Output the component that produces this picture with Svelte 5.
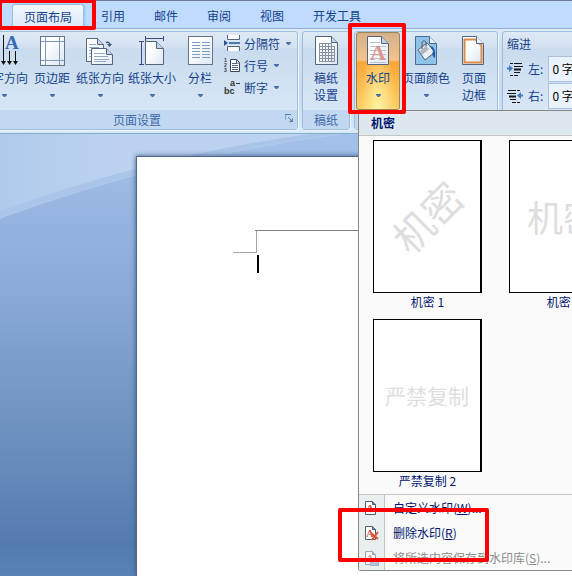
<script>
    const tabs = ["页面布局", "引用", "邮件", "审阅", "视图", "开发工具"];

    const pageTools = [
        { icon: "direction", label: "文字方向" },
        { icon: "margins", label: "页边距" },
        { icon: "orientation", label: "纸张方向" },
        { icon: "size", label: "纸张大小" },
        { icon: "columns", label: "分栏" }
    ];

    const smallTools = [
        { icon: "breaks", label: "分隔符" },
        { icon: "lines", label: "行号" },
        { icon: "hyphen", label: "断字" }
    ];

    const watermarks = [
        { text: "机密", caption: "机密 1", kind: "diagonal" },
        { text: "机密", caption: "机密 2", kind: "wide" },
        { text: "严禁复制", caption: "严禁复制 2", kind: "flat" }
    ];

    const commands = [
        { icon: "custom", label: "自定义水印", key: "W", more: "..." },
        { icon: "remove", label: "删除水印", key: "R", more: "" },
        { icon: "save", label: "将所选内容保存到水印库", key: "S", more: "...", disabled: true }
    ];

    let active = $state("页面布局");
    let left = $state("0 字符");
    let right = $state("0 字符");
</script>

{#snippet sheet(x, y, w, h, fold)}
    <path
        d="M{x} {y}h{w - fold}l{fold} {fold}v{h - fold}h{-w}z"
        fill="url(#paper)"
        stroke="#53667f"
    />
    <path d="M{x + w - fold} {y}v{fold}h{fold}" fill="#c3d4e8" stroke="#53667f" />
{/snippet}

{#snippet bigIcon(name)}
    <svg class="big-icon" viewBox="0 0 32 32" aria-hidden="true">
        {#if name === "direction"}
            <path d="M15.5 0v27M21.5 16v11M27.5 16v11" stroke="#111" fill="none" />
            <path d="M13 26h5l-2.500 4zM19 26h5l-2.500 4zM25 26h5l-2.500 4z" fill="#111" />
            <text x="17" y="14" class="icon-serif" font-size="19" fill="#376bb5">A</text>
        {:else if name === "margins"}
            <rect x="4.500" y="1.500" width="24" height="29" fill="url(#paper)" stroke="#66758a" />
            <path d="M9.500 2v28M23.500 2v28M5 6.500h23M5 25.500h23" stroke="#7e9abc" />
        {:else if name === "orientation"}
            {@render sheet(2.500, 3.500, 17, 23, 6)}
            <path d="M5 9.500h7M5 12.500h10M5 15.500h4M5 18.500h3M5 21.500h3" stroke="#8ea8c8" />
            {@render sheet(7.500, 13.500, 21, 16, 6)}
            <path d="M10 18.500h11M10 21.500h14M10 24.500h15M10 26.500h12" stroke="#8ea8c8" />
            <path d="M22 7.500q4-1 4 3" fill="none" stroke="#40587f" stroke-width="1.500" />
            <path d="M23 9h5l-2.500 3z" fill="#40587f" />
        {:else if name === "size"}
            {@render sheet(9.500, 6.500, 18, 23, 7)}
            <path d="M10 3.500h17M9.500 1v5M27.500 1v5M5.500 7v22M3 6.500h5M3 29.500h5" stroke="#42458a" />
        {:else if name === "columns"}
            <rect x="4.500" y="1.500" width="24" height="28" fill="url(#paper)" stroke="#66758a" />
            <path d="M8 7.500h8M18 7.500h8M8 10.500h8M18 10.500h8M8 13.500h8M18 13.500h8M8 16.500h8M18 16.500h8M8 19.500h8M18 19.500h8M8 22.500h8M18 22.500h8" stroke="#7f9cc0" />
        {:else if name === "grid"}
            {@render sheet(5.500, 1.500, 22, 28, 6)}
            <path d="M9 8.500h12M9 11.500h15M9 14.500h15M9 17.500h15M9 20.500h15M9 23.500h15M9 26.500h15M9.500 8v19M12.500 8v19M15.500 8v19M18.500 8v19M21.500 8v19M24.500 11v16" stroke="#8791a2" />
        {:else if name === "watermark"}
            {@render sheet(5.500, 1.500, 21, 28, 7)}
            <path d="M8 7.500h10M8 11.500h16M8 15.500h16M8 19.500h16M8 23.500h16M8 27.500h16" stroke="#b8c2cf" />
            <text x="8" y="25" class="icon-serif" font-size="22" fill="#dc9590">A</text>
        {:else if name === "color"}
            <path d="M5.500 1.500h14l7 7v21h-21z" fill="#8fc3e9" stroke="#4a6c94" />
            <path d="M19.500 1.500v7h7" fill="#e7f2fb" stroke="#4a6c94" />
            <path d="M8 15l9-7 8 9-10 8z" fill="#e9eff4" stroke="#53606e" />
            <path d="M12 14V8q1-4 4-1v8" fill="none" stroke="#4f5b68" />
            <path d="M20 11q6 0 5 12-4-2-2-7z" fill="#225aa6" />
            <path d="M10 16l6-5 3 3-7 6z" fill="#abb7c2" />
        {:else}
            {@render sheet(4.500, 1.500, 21, 28, 7)}
            <path d="M6.500 4.500h11l6 6v17h-17z" fill="none" stroke="#d98b4d" stroke-width="2" />
            <path d="M18.500 1.500v7h7" fill="#e7f2fb" stroke="#53667f" />
        {/if}
    </svg>
{/snippet}

{#snippet smallIcon(name)}
    <svg class="small-icon" viewBox="0 0 16 16" aria-hidden="true">
        {#if name === "breaks"}
            <path d="M3.500 0v4.500h12V0M3.500 16v-4.500h12V16" fill="#fff" stroke="#53667f" />
            <path d="M5 8h11" stroke="#4f74ae" stroke-width="2" />
            <path d="M0 5l4 3-4 3z" fill="#31548e" />
        {:else if name === "lines"}
            <text x="0" y="5" class="icon-sans" font-size="5">1</text>
            <text x="0" y="10" class="icon-sans" font-size="5">2</text>
            <text x="0" y="15" class="icon-sans" font-size="5">3</text>
            <path d="M6.500 2.500h6l3 3v9h-9z" fill="#fff" stroke="#34465f" />
            <path d="M8 6.500h5M8 8.500h6M8 10.500h6M8 12.500h6M12.500 2v4h3" stroke="#53667f" fill="none" />
        {:else if name === "hyphen"}
            <text x="0" y="15" class="icon-sans" font-size="9">bc</text>
            <text x="6" y="7" class="icon-sans" font-size="9">a</text>
            <path d="M12 4.500h4" stroke="#333" />
        {:else if name === "indent-left" || name === "indent-right"}
            <g transform={name === "indent-right" ? "matrix(-1 0 0 1 16 0)" : null}>
                <path d="M3 2.500h3M7 2.500h8M7 5.500h9M7 11.500h6M3 14.500h3M7 14.500h4" stroke="#151515" />
                <path d="M7 8.500h7" stroke="#151515" stroke-width="2" />
                <path d="M0 7.500h3" stroke="#4779bd" stroke-width="2" />
                <path d="M2 4l4 3.500-4 3.500z" fill="#4779bd" />
            </g>
        {:else}
            <path d="M2.500 1.500h7l3 3v10h-10z" fill="#fff" stroke="#4a5e78" />
            <path d="M9.500 1.500v3h3" fill="#7187a2" stroke="#4a5e78" />
            <text x="3" y="12" class="icon-serif" font-size="11" fill="#cf5550">A</text>
            {#if name === "remove"}
                <path d="M8 8l7 6M15 7l-6 8" stroke="#e0532f" stroke-width="2" />
            {:else if name === "save"}
                <path d="M7.500 8.500h8v7h-8z" fill="#7d9bd0" stroke="#5d76a5" />
                <path d="M9 9h5v3H9z" fill="#fff" />
            {/if}
        {/if}
    </svg>
{/snippet}

{#snippet arrow()}
    <svg class="arrow" viewBox="0 0 5 3" aria-hidden="true"><path d="M0 0h5v1L3 3H2L0 1z" fill="#4a6ea9" /></svg>
{/snippet}

<svg class="defs" aria-hidden="true">
    <linearGradient id="paper" x1="0" y1="0" x2="1" y2="1">
        <stop offset="0.3" stop-color="#fff" />
        <stop offset="1" stop-color="#dce6f2" />
    </linearGradient>
</svg>

<div class="window">
    <nav class="tabs">
        {#each tabs as tab}
            <button class="tab" class:active={tab === active} onclick={() => (active = tab)}>{tab}</button>
        {/each}
    </nav>

    <div class="ribbon">
        <section class="group page-setup">
            <div class="tools">
                {#each pageTools as tool}
                    <button class="tool">
                        {@render bigIcon(tool.icon)}
                        <span>{tool.label}</span>
                        {@render arrow()}
                    </button>
                {/each}
                <div class="small-tools">
                    {#each smallTools as tool}
                        <button class="small-tool">
                            {@render smallIcon(tool.icon)}
                            <span>{tool.label}</span>
                            {@render arrow()}
                        </button>
                    {/each}
                </div>
            </div>
            <footer class="group-title">
                <span>页面设置</span>
                <button class="launcher" aria-label="页面设置">
                    <svg viewBox="0 0 8 8"><path d="M0 6V.5h6M3 3l3 3" fill="none" stroke="#5b7fae" /><path d="M4 8h4V4z" fill="#5b7fae" /></svg>
                </button>
            </footer>
        </section>

        <section class="group">
            <div class="tools">
                <button class="tool">
                    {@render bigIcon("grid")}
                    <span>稿纸<br />设置</span>
                </button>
            </div>
            <footer class="group-title"><span>稿纸</span></footer>
        </section>

        <section class="group">
            <div class="tools">
                <button class="tool pressed">
                    {@render bigIcon("watermark")}
                    <span>水印</span>
                    {@render arrow()}
                </button>
                <button class="tool">
                    {@render bigIcon("color")}
                    <span>页面颜色</span>
                    {@render arrow()}
                </button>
                <button class="tool">
                    {@render bigIcon("border")}
                    <span>页面<br />边框</span>
                </button>
            </div>
            <footer class="group-title"><span>页面背景</span></footer>
        </section>

        <section class="group paragraph">
            <h2>缩进</h2>
            <label class="field">
                {@render smallIcon("indent-left")}
                <span>左:</span>
                <input bind:value={left} />
            </label>
            <label class="field">
                {@render smallIcon("indent-right")}
                <span>右:</span>
                <input bind:value={right} />
            </label>
        </section>
    </div>

    <main class="workspace">
        <svg class="waves" viewBox="0 0 572 90" preserveAspectRatio="none" aria-hidden="true">
            <linearGradient id="sky">
                <stop offset="0" stop-color="#afcbea" />
                <stop offset="0.4" stop-color="#bdd2f0" />
            </linearGradient>
            <path d="M0 0h340Q170 22 0 84z" fill="#a9c5ea" />
            <path d="M0 0h310Q160 20 0 77z" fill="url(#sky)" />
            <path d="M340 0Q170 22 0 84" fill="none" stroke="#b2cbeb" />
        </svg>
        <div class="paper">
            <div class="crop-mark"></div>
            <div class="caret"></div>
        </div>
    </main>

    <aside class="gallery">
        <h2>机密</h2>
        <div class="thumbs">
            {#each watermarks as mark}
                <button class="thumb">
                    <span class="preview {mark.kind}"><span>{mark.text}</span></span>
                    <span class="caption">{mark.caption}</span>
                </button>
            {/each}
        </div>
        <div class="commands">
            {#each commands as command}
                <button class="command" disabled={command.disabled}>
                    <span class="command-icon">{@render smallIcon(command.icon)}</span>
                    <span>{command.label}(<u>{command.key}</u>){command.more}</span>
                </button>
            {/each}
        </div>
    </aside>

    <div class="marker marker-tab"></div>
    <div class="marker marker-tool"></div>
    <div class="marker marker-command"></div>
</div>

<style>
    :global(body) {
        overflow: hidden;
    }

    .window {
        position: relative;
        display: flex;
        flex-direction: column;
        min-height: 100vh;
        overflow: hidden;
        font-family: "Noto Sans CJK SC", sans-serif;
        font-size: 12px;
        line-height: 17px;
        color: #15428b;
    }

    button,
    input {
        font: inherit;
        color: inherit;
        padding: 0;
        border: 0;
        background: none;
    }

    h2 {
        margin: 0;
        font-size: 12px;
        font-weight: normal;
    }

    .defs {
        position: absolute;
        width: 0;
        height: 0;
    }

    .icon-serif {
        font-family: "Liberation Serif", serif;
        font-weight: bold;
    }

    .icon-sans {
        font-family: "Liberation Sans", sans-serif;
        font-weight: bold;
        fill: #333;
    }

    .tabs {
        display: flex;
        gap: 1px;
        height: 24px;
        padding: 3px 0 0 12px;
        border-top: 1px solid #6b7c93;
        background: #bfdbff;
    }

    .tab {
        padding: 0 14px;
        line-height: 20px;
        white-space: nowrap;
    }

    .tab.active {
        width: 72px;
        margin-right: 2px;
        padding: 0;
        border: 1px solid #9ebde3;
        border-bottom: 0;
        border-radius: 3px 3px 0 0;
        background: linear-gradient(#f3f8fd, #dbe8f6);
        box-shadow: 1px 0 2px #7fd0e8;
    }

    .ribbon {
        display: flex;
        gap: 4px;
        height: 99px;
        padding: 2px 0 3px;
        border-top: 1px solid #8db2e3;
        border-bottom: 1px solid #82aec8;
        background: linear-gradient(#dfeaf6, #cfdff0 16px, #c8daee 70px, #d9ebf9);
    }

    .group {
        flex: none;
        display: flex;
        flex-direction: column;
        box-sizing: border-box;
        border: 1px solid #9ebfdc;
        border-radius: 3px;
        background: linear-gradient(#dee9f5, #d2e0f0 16px, #c9dbee 17px, #dceaf8);
        box-shadow: 1px 1px #edf5fc;
    }

    .page-setup {
        margin-left: -24px;
    }

    .tools {
        flex: 1;
        display: flex;
        padding: 0 1px;
    }

    .tool {
        display: flex;
        flex-direction: column;
        align-items: center;
        min-width: 44px;
        padding: 3px 2px 0;
        white-space: nowrap;
    }

    .big-icon {
        width: 32px;
        height: 32px;
        margin-bottom: 2px;
    }

    .arrow {
        width: 5px;
        height: 3px;
        margin-top: 8px;
    }

    .pressed {
        border-radius: 3px;
        background: radial-gradient(ellipse at bottom, #fff3a0, transparent 60%),
            linear-gradient(#d3b08a, #f5c38b 28px, #f9a637 30px, #fdcf65);
        box-shadow: inset 0 0 0 1px #9b8455;
    }

    .small-tools {
        display: flex;
        flex-direction: column;
        padding: 0 5px 0 2px;
    }

    .small-tool {
        display: flex;
        align-items: center;
        gap: 4px;
        height: 22px;
    }

    .small-icon {
        flex: none;
        width: 16px;
        height: 16px;
    }

    .small-tool .arrow {
        margin: 0 0 0 2px;
    }

    .group-title {
        position: relative;
        height: 19px;
        text-align: center;
        line-height: 20px;
        color: #3e6aaa;
        background: #c1d8f0;
    }

    .launcher {
        position: absolute;
        right: 4px;
        top: 4px;
        width: 8px;
        height: 8px;
    }

    .launcher svg {
        display: block;
    }

    .paragraph {
        flex: 1 0 120px;
        padding: 3px 0 0 4px;
    }

    .paragraph h2 {
        height: 20px;
    }

    .field {
        display: flex;
        align-items: center;
        gap: 5px;
        height: 27px;
        white-space: nowrap;
    }

    .field input {
        width: 80px;
        height: 24px;
        padding-left: 3px;
        border: 1px solid #abc1de;
        color: #000;
        background: #eaf2fb;
    }

    .workspace {
        position: relative;
        flex: 1;
        display: flex;
        padding: 22px 0 0 136px;
        background: linear-gradient(#a3c1ea, #8aa9d6 36%, #6b8fbe 70%, #537bb0 93%, #5982b7);
    }

    .waves {
        position: absolute;
        inset: 0 0 auto;
        width: 100%;
        height: 90px;
    }

    .paper {
        position: relative;
        flex: 1;
        padding: 73px 0 0 96px;
        border: 1px solid #50698c;
        border-width: 1px 0 0 1px;
        background: #fff;
        box-shadow: 0 0 5px #38547f;
    }

    .crop-mark {
        width: 23px;
        height: 22px;
        border: 1px solid #a6a6a6;
        border-width: 0 1px 1px 0;
    }

    .crop-mark::before {
        content: "";
        position: absolute;
        left: 118px;
        right: 0;
        border-top: 1px solid #808080;
    }

    .caret {
        width: 2px;
        height: 18px;
        margin: 2px 0 0 24px;
        background: #000;
    }

    .gallery {
        position: absolute;
        top: 110px;
        left: 358px;
        right: 0;
        border: 1px solid #868686;
        border-right: 0;
        border-radius: 0 0 0 3px;
        color: #00156e;
        background: #fafafa;
    }

    .gallery h2 {
        height: 24px;
        padding-left: 12px;
        border-bottom: 1px solid #c5c5c5;
        font-weight: bold;
        line-height: 24px;
        background: #dde7ee;
    }

    .thumbs {
        display: grid;
        grid-template-columns: 109px 109px;
        column-gap: 27px;
        padding: 4px 0 0 14px;
        overflow: hidden;
    }

    .thumb {
        display: flex;
        flex-direction: column;
    }

    .preview {
        display: flex;
        align-items: center;
        justify-content: center;
        box-sizing: border-box;
        width: 109px;
        height: 153px;
        border: 1px solid #000;
        border-right-width: 2px;
        color: #dedede;
        white-space: nowrap;
        background: #fff;
    }

    .diagonal {
        font-size: 40px;
    }

    .diagonal span {
        transform: rotate(-45deg);
    }

    .wide {
        font-size: 36px;
    }

    .flat {
        font-size: 21px;
    }

    .caption {
        height: 26px;
        align-self: center;
        line-height: 18px;
        white-space: nowrap;
    }

    .commands {
        margin-top: -4px;
        border-top: 1px solid #c5c5c5;
        background: linear-gradient(90deg, #e9eeee 25px, #c5c5c5 25px, #c5c5c5 26px, transparent 26px);
    }

    .command {
        display: flex;
        align-items: center;
        gap: 8px;
        width: 100%;
        height: 25px;
        white-space: nowrap;
    }

    .command-icon {
        display: flex;
        width: 22px;
        padding-left: 4px;
    }

    .command:disabled {
        color: #8d8d8d;
    }

    .command:disabled .command-icon {
        opacity: 0.5;
    }

    .marker {
        position: absolute;
        box-sizing: border-box;
        border: 4px solid #ff0000;
        border-radius: 2px;
        pointer-events: none;
    }

    .marker-tab {
        top: -1px;
        left: -2px;
        width: 98px;
        height: 31px;
    }

    .marker-tool {
        top: 23px;
        left: 348px;
        width: 58px;
        height: 91px;
    }

    .marker-command {
        top: 508px;
        left: 338px;
        width: 151px;
        height: 54px;
    }
</style>
